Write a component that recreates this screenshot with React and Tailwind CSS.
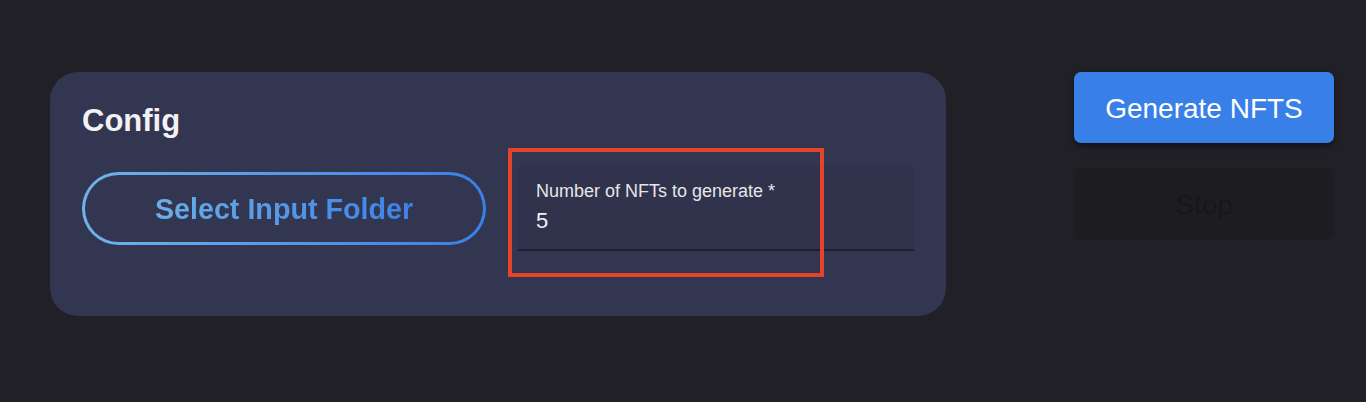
export default function App() {
  return (
    <div className="min-h-screen h-[402px] bg-[#202026] font-['Liberation_Sans'] text-white">
      <div className="flex items-start pt-[72px] pl-[50px] pr-[32px] justify-between">
        <section className="w-[896px] h-[244px] rounded-[28px] bg-[#333650] pl-8 pt-[31px]">
          <h2 className="text-[31px] leading-[36px] font-bold text-[#f2f2f4]">Config</h2>
          <div className="mt-[26px] flex items-start gap-8">
            <div className="mt-[7px] w-[404px] h-[73px] rounded-full p-[3px] bg-gradient-to-r from-[#70b3ea] to-[#3a7fe6]">
              <button className="w-full h-full rounded-full bg-[#333650] flex items-center justify-center pt-[3px]">
                <span className="text-[28.7px] font-bold bg-gradient-to-r from-[#6aaee8] to-[#3d82e6] bg-clip-text text-transparent">
                  Select Input Folder
                </span>
              </button>
            </div>
            <div className="relative w-[396px] h-[86px] rounded-t-[4px] bg-[#30334b] border-b-2 border-[#1e1f2c] pl-[18px] pt-[15px]">
              <p className="text-[18px] leading-[22px] text-[#e6e6ea]">Number of NFTs to generate *</p>
              <p className="text-[22px] leading-[28px] mt-[5px] text-[#f0f0f2]">5</p>
              <div className="absolute left-[-10px] top-[-17px] w-[316px] h-[129px] border-4 border-[#e5432b]" />
            </div>
          </div>
        </section>
        <div className="w-[260px] flex flex-col gap-[25px]">
          <button className="h-[71px] rounded-[7px] bg-[#3880e8] shadow-[0_3px_6px_rgba(0,0,0,0.45)] text-[28px] text-white pt-[2px]">
            Generate NFTS
          </button>
          <button className="h-[72px] rounded-[7px] bg-[#1d1d21] text-[28px] text-[#17171a] pt-[2px]">
            Stop
          </button>
        </div>
      </div>
    </div>
  );
}
